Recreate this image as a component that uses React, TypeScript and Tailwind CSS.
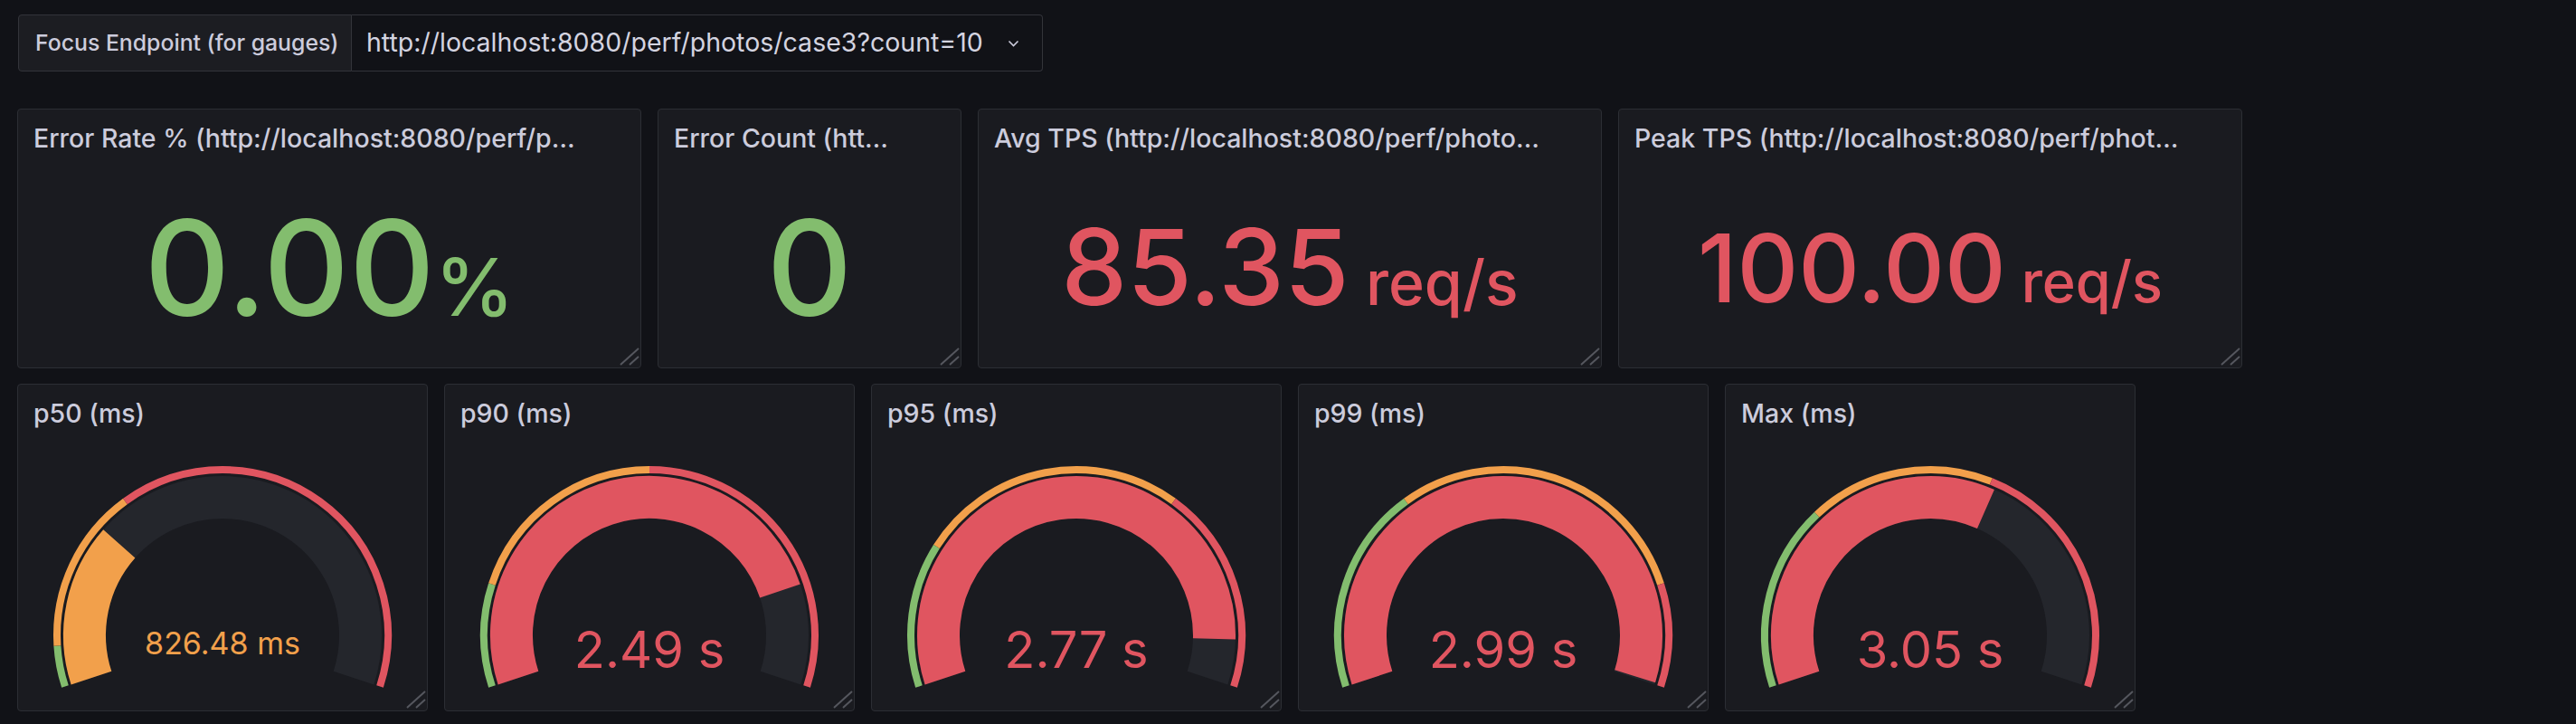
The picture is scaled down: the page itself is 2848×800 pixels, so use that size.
import React from 'react'

const GREEN = '#83BD6E'
const ORANGE = '#F2A04B'
const RED = '#E05560'

type Stat = {
  title: string
  value: string
  unit?: string
  size: number
  unitSize?: number
  color: string
  span: string
}

const stats: Stat[] = [
  { title: 'Error Rate % (http://localhost:8080/perf/p…', value: '0.00', unit: '%', size: 147, unitSize: 88, color: GREEN, span: 'col-span-6' },
  { title: 'Error Count (htt…', value: '0', size: 147, color: GREEN, span: 'col-span-3' },
  { title: 'Avg TPS (http://localhost:8080/perf/photo…', value: '85.35', unit: ' req/s', size: 116, unitSize: 68, color: RED, span: 'col-span-6' },
  { title: 'Peak TPS (http://localhost:8080/perf/phot…', value: '100.00', unit: ' req/s', size: 105, unitSize: 63, color: RED, span: 'col-span-6' },
]

type Gauge = {
  title: string
  value: number
  text: string
  max: number
  thresholds: [number, number]
  size: number
  baseline: number
}

const gauges: Gauge[] = [
  { title: 'p50 (ms)', value: 826.48, text: '826.48 ms', max: 3000, thresholds: [200, 1000], size: 34, baseline: 234 },
  { title: 'p90 (ms)', value: 2490, text: '2.49 s', max: 3000, thresholds: [500, 1500], size: 56, baseline: 249 },
  { title: 'p95 (ms)', value: 2770, text: '2.77 s', max: 3000, thresholds: [700, 2000], size: 56, baseline: 249 },
  { title: 'p99 (ms)', value: 2990, text: '2.99 s', max: 3000, thresholds: [1000, 2500], size: 56, baseline: 249 },
  { title: 'Max (ms)', value: 3050, text: '3.05 s', max: 5000, thresholds: [1500, 3000], size: 56, baseline: 249 },
]

// gauge spans 216deg, from 198deg (lower left) clockwise to -18deg (lower right)
const START = 198
const SWEEP = 216

function arcPath(cx: number, cy: number, r: number, a0: number, a1: number) {
  const pt = (a: number) => [cx + r * Math.cos((a * Math.PI) / 180), cy - r * Math.sin((a * Math.PI) / 180)]
  const [x0, y0] = pt(a0)
  const [x1, y1] = pt(a1)
  const large = a0 - a1 > 180 ? 1 : 0
  return `M ${x0.toFixed(2)} ${y0.toFixed(2)} A ${r} ${r} 0 ${large} 1 ${x1.toFixed(2)} ${y1.toFixed(2)}`
}

function ResizeHandle() {
  return (
    <svg className="absolute right-0 bottom-0" width="24" height="24" viewBox="0 0 24 24">
      <line x1="2" y1="21" x2="22" y2="3" stroke="#55575e" strokeWidth="2" />
      <line x1="12" y1="21" x2="22" y2="12" stroke="#55575e" strokeWidth="2" />
    </svg>
  )
}

function PanelTitle({ children }: { children: React.ReactNode }) {
  return (
    <div className="h-[64px] flex items-center pl-[17px] pr-4 shrink-0">
      <h2 className="text-[28.5px] font-medium text-[#ccccdc] whitespace-nowrap leading-none">{children}</h2>
    </div>
  )
}

function GaugeSvg({ g }: { g: Gauge }) {
  const cx = 226
  const cy = 213
  const frac = (v: number) => Math.min(Math.max(v / g.max, 0), 1)
  const ang = (v: number) => START - SWEEP * frac(v)
  const color = g.value >= g.thresholds[1] ? RED : g.value >= g.thresholds[0] ? ORANGE : GREEN
  const rv = 152.5
  const rt = 183

  return (
    <svg className="w-full h-full" viewBox="0 0 452 296">
      <path d={arcPath(cx, cy, rt, START, ang(g.thresholds[0]))} stroke={GREEN} strokeWidth="8" fill="none" />
      <path d={arcPath(cx, cy, rt, ang(g.thresholds[0]), ang(g.thresholds[1]))} stroke={ORANGE} strokeWidth="8" fill="none" />
      <path d={arcPath(cx, cy, rt, ang(g.thresholds[1]), START - SWEEP)} stroke={RED} strokeWidth="8" fill="none" />
      <path d={arcPath(cx, cy, rv, START, START - SWEEP)} stroke="#24262c" strokeWidth="47" fill="none" />
      <path d={arcPath(cx, cy, rv, START, ang(g.value))} stroke={color} strokeWidth="47" fill="none" />
      <text
        x={cx}
        y={g.baseline}
        textAnchor="middle"
        fill={color}
        fontSize={g.size}
        fontFamily="Inter, sans-serif"
        fontWeight={400}
      >
        {g.text}
      </text>
    </svg>
  )
}

export default function App() {
  return (
    <div className="w-full h-[800px] bg-[#111217] font-['Inter',sans-serif] pl-[19px] pt-[16px] overflow-hidden">
      <div className="flex h-[63px] ml-px">
        <div className="w-[369px] h-full flex items-center pl-[18px] bg-[#1c1d22] border border-[#33343a] rounded-l-[4px] text-[24.8px] font-medium text-[#ccccdc] whitespace-nowrap">
          Focus Endpoint (for gauges)
        </div>
        <div className="w-[764px] h-full flex items-center justify-between pl-[16px] pr-[25px] bg-[#111217] border-y border-r border-[#33343a] rounded-r-[4px] text-[28.5px] text-[#d4d4e0] whitespace-nowrap">
          <span>http://localhost:8080/perf/photos/case3?count=10</span>
          <svg width="13" height="8" viewBox="0 0 13 8">
            <path d="M1.5 1.5 L6.5 6.5 L11.5 1.5" stroke="#ccccdc" strokeWidth="1.6" fill="none" />
          </svg>
        </div>
      </div>

      <div className="mt-[41px] grid grid-cols-[repeat(24,100px)] grid-rows-[287px_362px] gap-x-[18px] gap-y-[17px]">
        {stats.map((s) => (
          <div key={s.title} className={`${s.span} relative flex flex-col bg-[#1a1b20] border border-[#2c2e34] rounded-[4px]`}>
            <PanelTitle>{s.title}</PanelTitle>
            <div className="flex-1 flex items-center justify-center pb-px">
              <span className="leading-none font-medium whitespace-pre" style={{ color: s.color }}>
                <span style={{ fontSize: s.size }}>{s.value}</span>
                {s.unit ? <span style={{ fontSize: s.unitSize }}>{s.unit}</span> : null}
              </span>
            </div>
            <ResizeHandle />
          </div>
        ))}
        {gauges.map((g) => (
          <div key={g.title} className="col-span-4 relative flex flex-col bg-[#1a1b20] border border-[#2c2e34] rounded-[4px]">
            <PanelTitle>{g.title}</PanelTitle>
            <div className="flex-1">
              <GaugeSvg g={g} />
            </div>
            <ResizeHandle />
          </div>
        ))}
      </div>
    </div>
  )
}
